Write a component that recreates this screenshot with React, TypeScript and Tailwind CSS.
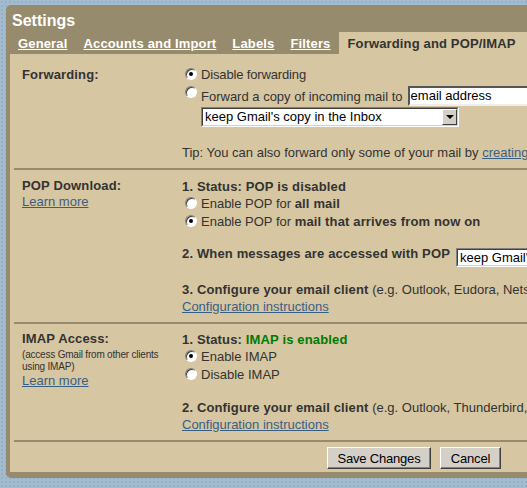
import React from "react";

function Radio({ checked, className = "" }: { checked?: boolean; className?: string }) {
  return (
    <span
      className={`ml-[3px] mr-[4px] flex size-[12px] shrink-0 items-center justify-center rounded-full border border-t-[#808080] border-l-[#808080] border-r-white border-b-white bg-white shadow-[inset_1px_1px_0_#404040] ${className}`}
    >
      {checked && <span className="size-[4px] rounded-full bg-black" />}
    </span>
  );
}

function Select({ className = "" }: { className?: string }) {
  return (
    <div
      className={`flex border border-t-[#808080] border-l-[#808080] border-r-white border-b-white ${className}`}
    >
      <div className="flex flex-1 border border-t-[#404040] border-l-[#404040] border-r-[#d4d0c8] border-b-[#d4d0c8] bg-white">
        <span className="flex-1 overflow-hidden whitespace-nowrap pl-[2px] leading-[16px] text-black">
          keep Gmail's copy in the Inbox
        </span>
        <span className="flex w-[15px] shrink-0 items-center justify-center border border-t-white border-l-white border-r-[#404040] border-b-[#404040] bg-[#d4d0c8]">
          <span className="h-0 w-0 border-x-[4px] border-t-[4px] border-x-transparent border-t-black" />
        </span>
      </div>
    </div>
  );
}

function Separator() {
  return <div className="ml-[4px] h-[2px] bg-[#978b6d]" />;
}

function Link({ children }: { children: React.ReactNode }) {
  return <a className="cursor-pointer text-[#3a5f85] underline">{children}</a>;
}

function B({ children, className = "" }: { children: React.ReactNode; className?: string }) {
  return <b className={`font-bold tracking-[0.15px] ${className}`}>{children}</b>;
}

export default function App() {
  return (
    <div className="h-[488px] w-[527px] overflow-hidden bg-[#a3bbcf] bg-[radial-gradient(circle,#97b0c5_1px,transparent_1.5px)] bg-[length:4px_4px] pl-[6px] pt-[5px] font-['Liberation_Sans',Arial,sans-serif]">
      <div className="w-[620px] rounded-[5px] bg-[#978b6d] pb-[6px] pl-[4px] pt-[6px]">
        <h1 className="pl-[2px] text-[16px] font-bold leading-[20px] text-white">Settings</h1>

        {/* Tabs */}
        <div className="mt-[1px] flex h-[22px] text-[13px] font-bold leading-[17px] tracking-[0.15px]">
          <a className="px-[8px] pt-[3px] text-white underline">General</a>
          <a className="px-[8px] pt-[3px] text-white underline">Accounts and Import</a>
          <a className="px-[8px] pt-[3px] text-white underline">Labels</a>
          <a className="px-[8px] pt-[3px] text-white underline">Filters</a>
          <span className="bg-[#d6c6a1] pl-[9px] pr-[13px] pt-[3px] text-[#333]">
            Forwarding and POP/IMAP
          </span>
        </div>

        <div className="bg-[#d6c6a1] text-[13px] leading-[17px] text-[#333]">
          {/* Forwarding */}
          <div className="flex pb-[7px] pl-[12px] pt-[12px]">
            <div className="w-[160px] shrink-0">
              <B>Forwarding:</B>
            </div>
            <div className="flex-1 whitespace-nowrap">
              <div className="mb-[3px] flex items-start">
                <Radio checked className="mt-[2px]" />
                <span className="tracking-[-0.15px]">Disable forwarding</span>
              </div>
              <div className="flex h-[21px] items-start">
                <Radio />
                <span className="mt-[2px]">Forward a copy of incoming mail to</span>
                <div className="ml-[5px] h-[20px] w-[200px] border-2 border-t-[#555] border-l-[#555] border-r-[#eee] border-b-[#eee] bg-white pl-[1px] leading-[16px] text-black">
                  email address
                </div>
              </div>
              <Select className="ml-[19px] h-[20px] w-[258px]" />
              <div className="mt-[17px]">
                Tip: You can also forward only some of your mail by <Link>creating a filter!</Link>
              </div>
            </div>
          </div>
          <Separator />

          {/* POP */}
          <div className="flex pb-[7px] pl-[12px] pt-[8px]">
            <div className="w-[160px] shrink-0 leading-[16px]">
              <div>
                <B>POP Download:</B>
              </div>
              <Link>Learn more</Link>
            </div>
            <div className="flex-1 whitespace-nowrap">
              <div>
                <B>1. Status: POP is disabled</B>
              </div>
              <div className="flex items-start">
                <Radio className="mt-[2px]" />
                <span>
                  Enable POP for <B>all mail</B>
                </span>
              </div>
              <div className="mt-[1px] flex items-start">
                <Radio checked className="mt-[2px]" />
                <span>
                  Enable POP for <B>mail that arrives from now on</B>
                </span>
              </div>
              <div className="mt-[15px] flex items-start">
                <B>2. When messages are accessed with POP</B>
                <Select className="ml-[6px] mt-[3px] h-[19px] w-[258px]" />
              </div>
              <div className="mt-[14px]">
                <B>3. Configure your email client</B> (e.g. Outlook, Eudora, Netscape Mail)
              </div>
              <Link>Configuration instructions</Link>
            </div>
          </div>
          <Separator />

          {/* IMAP */}
          <div className="flex pb-[7px] pl-[12px] pt-[7px]">
            <div className="w-[160px] shrink-0 leading-[16px]">
              <div>
                <B>IMAP Access:</B>
              </div>
              <div className="mt-[2px] text-[10px] leading-[12px] tracking-[-0.2px]">
                (access Gmail from other clients
                <br />
                using IMAP)
              </div>
              <Link>Learn more</Link>
            </div>
            <div className="flex-1 whitespace-nowrap">
              <div>
                <B>
                  1. Status: <span className="text-[#007a00]">IMAP is enabled</span>
                </B>
              </div>
              <div className="flex items-start">
                <Radio checked className="mt-[2px]" />
                <span>Enable IMAP</span>
              </div>
              <div className="mt-[1px] flex items-start">
                <Radio className="mt-[2px]" />
                <span>Disable IMAP</span>
              </div>
              <div className="mt-[16px]">
                <B>2. Configure your email client</B> (e.g. Outlook, Thunderbird, iPhone)
              </div>
              <Link>Configuration instructions</Link>
            </div>
          </div>
          <Separator />

          {/* Buttons */}
          <div className="flex gap-[9px] pb-[3px] pl-[317px] pt-[5px]">
            <button className="h-[22px] w-[104px] border border-t-white border-l-white border-r-[#404040] border-b-[#404040] bg-[#d4d0c8] text-[13px] tracking-[-0.2px] text-black shadow-[inset_-1px_-1px_0_#808080]">
              Save Changes
            </button>
            <button className="h-[22px] w-[61px] border border-t-white border-l-white border-r-[#404040] border-b-[#404040] bg-[#d4d0c8] text-[13px] tracking-[-0.2px] text-black shadow-[inset_-1px_-1px_0_#808080]">
              Cancel
            </button>
          </div>
        </div>
      </div>
    </div>
  );
}
